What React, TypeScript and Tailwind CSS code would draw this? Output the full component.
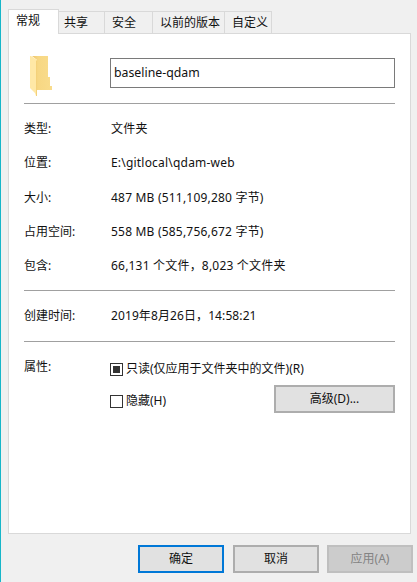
const fontStack = "font-['Noto_Sans','Noto_Sans_CJK_SC',sans-serif]";

const tabs = [
  { label: '共享', width: 'w-[46px] pl-[5px]' },
  { label: '安全', width: 'w-[48px] pl-[7px]' },
  { label: '以前的版本', width: 'w-[72px] pl-[7px]' },
  { label: '自定义', width: 'w-[47px] pl-[7px]' },
];

function FolderIcon() {
  return (
    <svg width="22" height="40" viewBox="0 0 22 40" className="block">
      <defs>
        <linearGradient id="folderBack" x1="0" x2="1" y1="0" y2="0">
          <stop offset="0" stopColor="#eec46a" />
          <stop offset="0.3" stopColor="#f7d783" />
          <stop offset="1" stopColor="#f9dc8c" />
        </linearGradient>
      </defs>
      <path d="M2 0H18V21H20V30H22V34H7V4Z" fill="url(#folderBack)" />
      <path d="M0 0H1L7 4V40H6L5 37L0 32Z" fill="#ffe8a6" />
      <path d="M7 4V40H6V5Z" fill="#f4d17a" />
    </svg>
  );
}

function InfoRow({ label, value, className, tracking = 'tracking-[0.2px]' }: { label: string; value: string; className?: string; tracking?: string }) {
  return (
    <div className={`flex h-[18px] items-center ${className ?? ''}`}>
      <span className="w-[87px] shrink-0">{label}</span>
      <span className={tracking}>{value}</span>
    </div>
  );
}

function Divider({ className }: { className?: string }) {
  return <div className={`h-px bg-[#a0a0a0] ${className ?? ''}`} />;
}

function DialogButton({ label, variant }: { label: string; variant?: 'default' | 'disabled' }) {
  const tone =
    variant === 'default'
      ? 'border-2 border-[#0078d7] bg-[#e1e1e1]'
      : variant === 'disabled'
        ? 'border-2 border-[#bfbfbf] bg-[#cccccc] text-[#838383]'
        : 'border-2 border-[#adadad] bg-[#e1e1e1]';
  return (
    <div className={`flex h-[28px] w-[86px] items-center justify-center ${tone}`}>{label}</div>
  );
}

export default function App() {
  return (
    <div className={`flex h-[582px] w-[417px] overflow-hidden bg-[#f0f0f0] text-[12px] text-[#111111] ${fontStack}`}>
      <div className="w-px shrink-0 bg-[#17b6c9]" />
      <div className="flex min-w-0 flex-1 flex-col pt-[9px] pl-[7px] pr-[6px]">
        {/* Tabs */}
        <div className="relative z-10 flex h-[25px] items-end">
          <div className="h-[25px] w-[51px] border border-b-0 border-[#d9d9d9] bg-white pl-[7px] pt-[2px]">常规</div>
          {tabs.map((tab) => (
            <div
              key={tab.label}
              className={`flex h-[23px] items-center border-t border-r border-b border-[#d9d9d9] ${tab.width}`}
            >
              {tab.label}
            </div>
          ))}
        </div>

        {/* Panel */}
        <div className="-mt-px flex h-[501px] w-[403px] flex-col border border-[#d9d9d9] bg-white px-[15px]">
          <div className="flex h-[69px] items-start pt-[22px]">
            <div className="w-[86px] shrink-0 pl-[6px]">
              <FolderIcon />
            </div>
            <div className="mt-[2px] flex h-[30px] flex-1 items-center border border-[#7a7a7a] pl-[3px] text-[12.3px]">
              baseline-qdam
            </div>
          </div>
          <Divider />

          <InfoRow label="类型:" value="文件夹" className="mt-[16px]" />
          <InfoRow label="位置:" value="E:\gitlocal\qdam-web" className="mt-[16px]" />
          <InfoRow label="大小:" value="487 MB (511,109,280 字节)" className="mt-[17px]" />
          <InfoRow label="占用空间:" value="558 MB (585,756,672 字节)" className="mt-[16px]" />
          <InfoRow label="包含:" value="66,131 个文件，8,023 个文件夹" className="mt-[16px]" />
          <Divider className="mt-[15px]" />

          <InfoRow label="创建时间:" value="2019年8月26日，14:58:21" className="mt-[16px]" tracking="tracking-[0.1px]" />
          <Divider className="mt-[16px]" />

          {/* Attributes */}
          <div className="mt-[16px] flex">
            <span className="h-[18px] w-[86px] shrink-0 leading-[18px]">属性:</span>
            <div className="mt-[2px] flex-1">
              <div className="flex h-[18px] items-center gap-[3px]">
                <div className="flex h-[13px] w-[13px] items-center justify-center border border-[#333333]">
                  <div className="h-[7px] w-[7px] bg-[#333333]" />
                </div>
                <span>只读(仅应用于文件夹中的文件)(R)</span>
              </div>
              <div className="mt-[14px] flex items-start justify-between">
                <div className="flex h-[18px] items-center gap-[3px]">
                  <div className="h-[13px] w-[13px] border border-[#333333]" />
                  <span>隐藏(H)</span>
                </div>
                <div className="-mt-[7px] flex h-[28px] w-[121px] items-center justify-center border-2 border-[#adadad] bg-[#e1e1e1]">
                  高级(D)...
                </div>
              </div>
            </div>
          </div>
        </div>

        {/* Footer buttons */}
        <div className="mt-[11px] -mr-[2px] flex justify-end gap-[8px]">
          <DialogButton label="确定" variant="default" />
          <div className="ml-px">
            <DialogButton label="取消" />
          </div>
          <DialogButton label="应用(A)" variant="disabled" />
        </div>
      </div>
    </div>
  );
}
